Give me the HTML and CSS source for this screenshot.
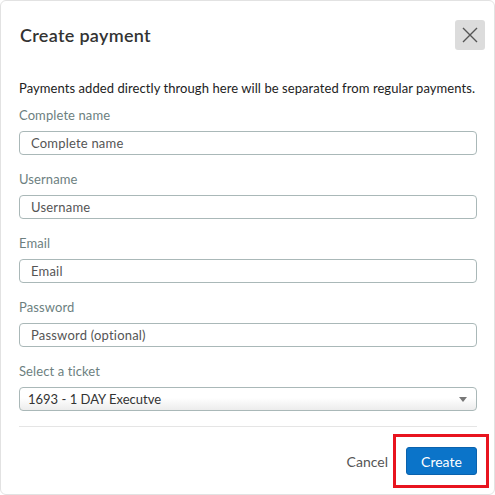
FILE: index.html
```html
<!DOCTYPE html>
<html>
<head>
    <title>Create payment</title>
    <link rel="stylesheet" href="styles.css">
</head>
<body>
    <div class="modal">
        <div class="modal-header">
            <h3>Create payment</h3>
            <button class="close-btn" aria-label="Close">
                <svg width="16" height="16" viewBox="0 0 16 16">
                    <path d="M1 1 L15 15 M15 1 L1 15" stroke="#555" stroke-width="1.4" fill="none"/>
                </svg>
            </button>
        </div>
        <div class="modal-body">
            <p class="intro">Payments added directly through here will be separated from regular payments.</p>
            <div class="field">
                <label for="name">Complete name</label>
                <input type="text" id="name" placeholder="Complete name">
            </div>
            <div class="field">
                <label for="username">Username</label>
                <input type="text" id="username" placeholder="Username">
            </div>
            <div class="field">
                <label for="email">Email</label>
                <input type="text" id="email" placeholder="Email">
            </div>
            <div class="field">
                <label for="password">Password</label>
                <input type="password" id="password" placeholder="Password (optional)">
            </div>
            <div class="field">
                <label for="ticket">Select a ticket</label>
                <div class="select">
                    <span>1693 - 1 DAY Executve</span>
                    <span class="arrow"></span>
                </div>
            </div>
        </div>
        <div class="modal-footer">
            <a class="cancel" href="#">Cancel</a>
            <div class="create-wrap">
                <button class="create-btn">Create</button>
                <span class="highlight"></span>
            </div>
        </div>
    </div>
</body>
</html>
```

FILE: styles.css
```css
body {
    margin: 0;
    font-family: Lato, "Open Sans", sans-serif;
    background: #fff;
}

.modal {
    width: 493px;
    height: 493px;
    border: 1px solid #e2e2e2;
    border-radius: 6px;
    position: relative;
}

.modal-header {
    display: flex;
    align-items: center;
    justify-content: space-between;
    padding: 19px 9px 0 19px;
}

.modal-header h3 {
    margin: 0;
    font-size: 18px;
    font-weight: 600;
    color: #333;
    letter-spacing: 0.3px;
}

.close-btn {
    width: 30px;
    height: 30px;
    border: none;
    border-radius: 3px;
    background: #dcdcdc;
    display: flex;
    align-items: center;
    justify-content: center;
    padding: 0;
}

.modal-body {
    padding: 0 17px 0 18px;
}

.intro {
    margin: 29px 0 9px;
    font-size: 13px;
    line-height: 18px;
    color: #222;
    letter-spacing: 0.07px;
}

.field {
    margin-bottom: 15px;
}

.field label {
    display: block;
    font-size: 13px;
    line-height: 18px;
    color: #6d7f7f;
    margin-bottom: 7px;
    letter-spacing: 0.1px;
}

.field input {
    display: block;
    width: 100%;
    height: 24px;
    box-sizing: border-box;
    border: 1px solid #aab8b8;
    border-radius: 4px;
    padding: 0 11px;
    font-family: inherit;
    font-size: 13px;
    color: #333;
    letter-spacing: 0.2px;
}

.field input::placeholder {
    color: #555;
}

.select {
    display: flex;
    align-items: center;
    justify-content: space-between;
    height: 24px;
    box-sizing: border-box;
    border: 1px solid #aab8b8;
    border-radius: 4px;
    padding: 0 9px 0 8px;
    font-size: 13px;
    color: #333;
    background: linear-gradient(#fff 0%, #fff 45%, #ececec 100%);
}

.arrow {
    width: 0;
    height: 0;
    border-left: 4px solid transparent;
    border-right: 4px solid transparent;
    border-top: 5px solid #777;
}

.modal-footer {
    margin: 0 17px 0 18px;
    border-top: 1px solid #e5e5e5;
    display: flex;
    justify-content: flex-end;
    align-items: center;
    gap: 18px;
    padding-top: 20px;
}

.cancel {
    font-size: 14px;
    color: #555;
    text-decoration: none;
}

.create-wrap {
    position: relative;
}

.create-btn {
    display: block;
    width: 71px;
    height: 28px;
    border: 1px solid #0a62ad;
    border-radius: 3px;
    background: #0b74c9;
    color: #fff;
    font-family: inherit;
    font-size: 14px;
}

.highlight {
    position: absolute;
    top: -13px;
    left: -13px;
    right: -12px;
    bottom: -13px;
    border: 3px solid #e8141f;
}
```
